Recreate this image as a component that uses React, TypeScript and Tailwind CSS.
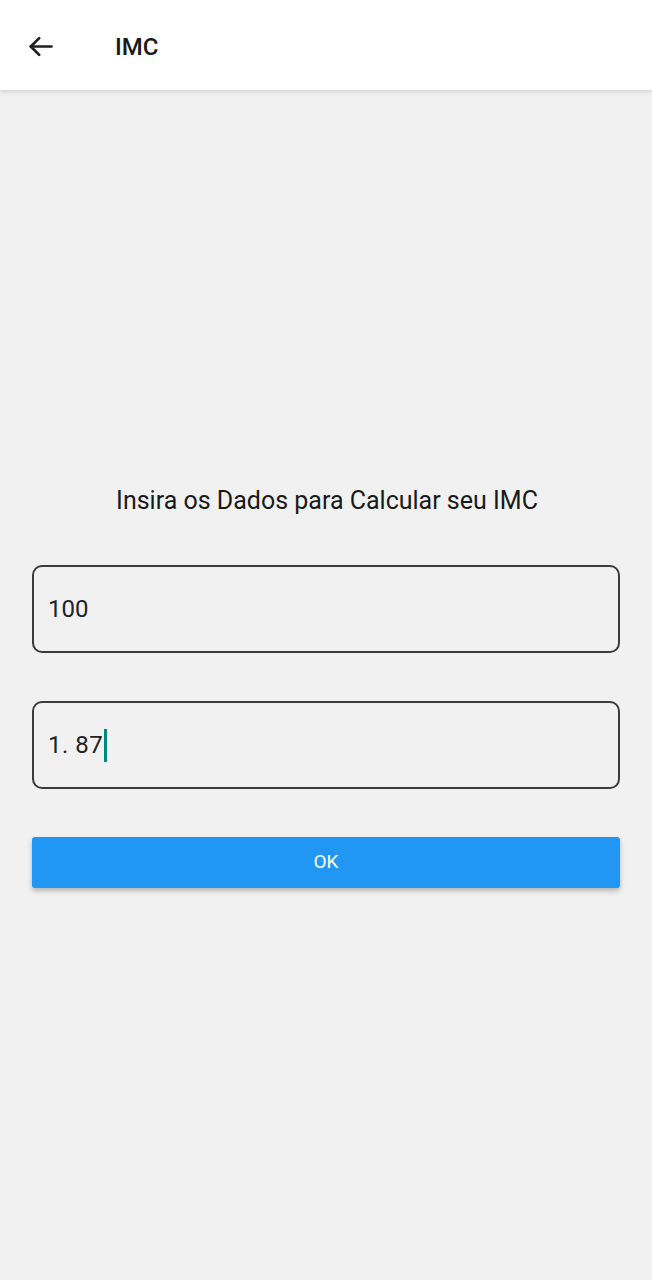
import React from 'react';

const font = { fontFamily: 'Roboto, "Noto Sans", sans-serif' };

const App: React.FC = () => {
  return (
    <div className="min-h-[1280px] bg-[#f1f1f1] flex flex-col" style={font}>
      <header className="h-[90px] bg-white flex items-center shadow-[0_2px_4px_rgba(0,0,0,0.12)] relative z-10">
        <button className="w-[80px] h-full flex items-center justify-center pt-[2px] text-[#1f1f1f]">
          <svg width="31" height="31" viewBox="0 0 24 24" fill="none" stroke="currentColor" strokeWidth="2.1" strokeLinecap="round" strokeLinejoin="round">
            <path d="M20.5 12H4.5" />
            <path d="M11 5.5L4.5 12l6.5 6.5" />
          </svg>
        </button>
        <h1 className="ml-[35px] pt-[3px] text-[24px] font-medium text-[#1a1a1a]">IMC</h1>
      </header>

      <main className="flex flex-col px-[32px] pt-[392px]">
        <p className="text-center text-[25px] text-[#1a1a1a] leading-[38px] pl-[2px]">
          Insira os Dados para Calcular seu IMC
        </p>

        <div className="mt-[45px] h-[88px] rounded-[10px] border-2 border-[#3c3c3c] flex items-center px-[14px]">
          <span className="text-[24px] text-[#222]">100</span>
        </div>

        <div className="mt-[48px] h-[88px] rounded-[10px] border-2 border-[#3c3c3c] flex items-center px-[14px]">
          <span className="text-[24px] text-[#222] tracking-[0.5px]">1.&nbsp;87</span>
          <span className="w-[3px] h-[33px] bg-[#00897b] ml-[1px]" />
        </div>

        <button className="mt-[48px] h-[51px] rounded-[3px] bg-[#2196f3] text-white text-[19px] shadow-[0_3px_5px_rgba(0,0,0,0.25)]">
          OK
        </button>
      </main>
    </div>
  );
};

export default App;
